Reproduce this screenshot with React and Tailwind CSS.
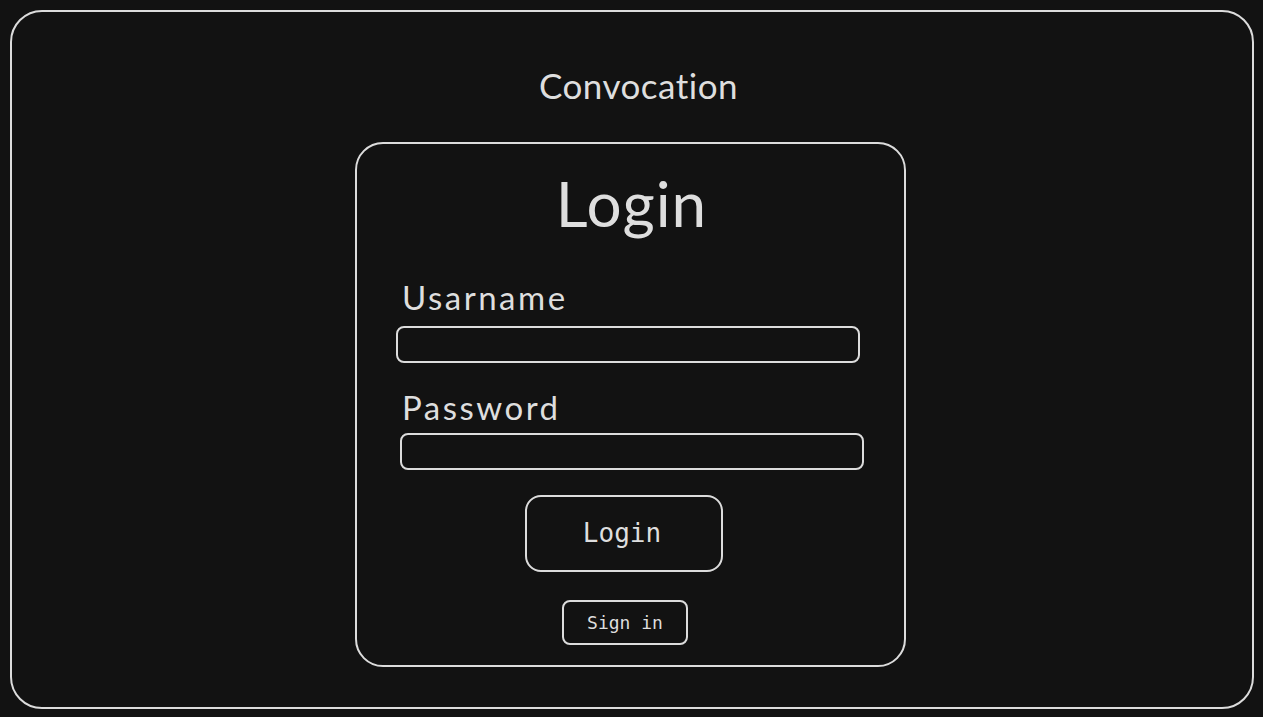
export default function App() {
  return (
    <div className="w-[1263px] h-[717px] bg-[#121212] p-[10px] overflow-hidden font-[Lato,sans-serif] text-[#dedede]">
      <div className="h-[699px] w-[1244px] border-2 border-[#dcdcdc] rounded-[32px] flex flex-col">
        <div className="pt-[56px] text-center text-[35px] leading-none tracking-[0.5px] pl-[13px]">
          Convocation
        </div>
        <div className="mt-[39px] ml-[343px] w-[551px] h-[525px] border-2 border-[#dcdcdc] rounded-[28px] flex flex-col">
          <div className="mt-[28px] text-center text-[62px] leading-none tracking-[1px] pl-[2px]">
            Login
          </div>
          <div className="mt-[47px] ml-[45px] text-[33px] leading-none tracking-[2.5px]">
            Usarname
          </div>
          <div className="mt-[12px] ml-[39px] w-[464px] h-[37px] border-2 border-[#dcdcdc] rounded-[8px]" />
          <div className="mt-[28px] ml-[45px] text-[33px] leading-none tracking-[2.5px]">
            Password
          </div>
          <div className="mt-[9px] ml-[43px] w-[464px] h-[37px] border-2 border-[#dcdcdc] rounded-[8px]" />
          <div className="mt-[25px] ml-[168px] w-[198px] h-[77px] border-2 border-[#dcdcdc] rounded-[16px] flex items-center justify-center font-['DejaVu_Sans_Mono',monospace] text-[26px] pr-[4px]">
            Login
          </div>
          <div className="mt-[28px] ml-[205px] w-[126px] h-[45px] border-2 border-[#dcdcdc] rounded-[8px] flex items-center justify-center font-['DejaVu_Sans_Mono',monospace] text-[18px]">
            Sign in
          </div>
        </div>
      </div>
    </div>
  );
}
